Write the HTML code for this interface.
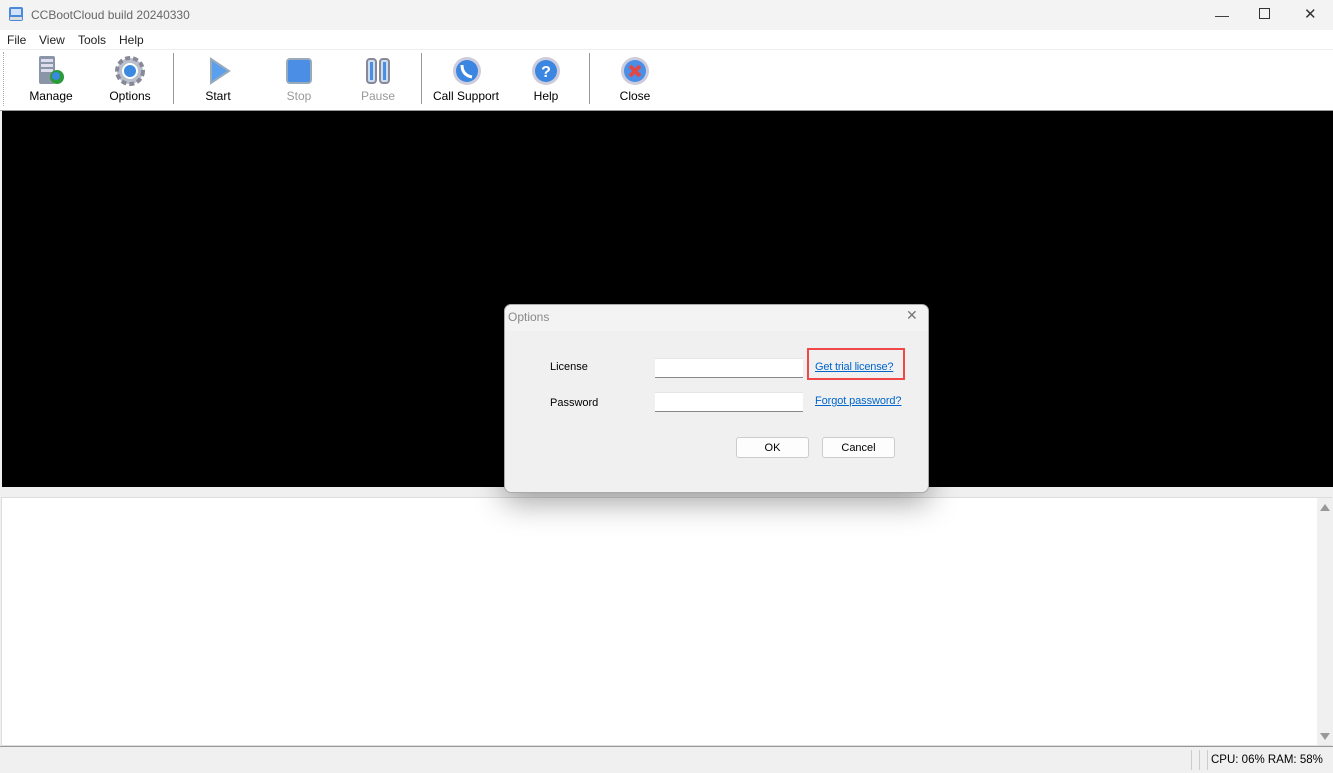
<!DOCTYPE html>
<html><head><style>
*{margin:0;padding:0;box-sizing:border-box}
body{width:1333px;height:773px;position:relative;overflow:hidden;background:#f0f0f0;font-family:"Liberation Sans",sans-serif;font-size:12px;color:#000}
.a{position:absolute}
.tb{font-size:12px;text-align:center;width:80px}
.lnk{color:#0066cc;text-decoration:underline;font-size:11px}
</style></head><body>
<div class="a" style="left:0;top:0;width:1333px;height:30px;background:#f3f3f3"></div>
<svg class="a" style="left:8px;top:6px" width="16" height="16"><rect x="1" y="1" width="14" height="14" rx="2" fill="#4a8ad8"/><rect x="3" y="3" width="10" height="6" fill="#cfe3ff"/><rect x="2" y="11" width="12" height="3" fill="#ddd"/></svg>
<div class="a" style="left:31px;top:8px;font-size:12px;color:#666">CCBootCloud build 20240330</div>
<div class="a" style="left:1215px;top:7px;font-size:14px;color:#333">&#8212;</div>
<div class="a" style="left:1259px;top:8px;width:11px;height:11px;border:1px solid #333"></div>
<div class="a" style="left:1304px;top:5px;font-size:15px;color:#333">&#10005;</div>
<div class="a" style="left:0;top:30px;width:1333px;height:19px;background:#fff"></div>
<div class="a" style="left:7px;top:33px;color:#222">File</div>
<div class="a" style="left:39px;top:33px;color:#222">View</div>
<div class="a" style="left:78px;top:33px;color:#222">Tools</div>
<div class="a" style="left:119px;top:33px;color:#222">Help</div>
<div class="a" style="left:0;top:49px;width:1333px;height:62px;background:#fff;border-top:1px solid #eee"></div>
<div class="a" style="left:3px;top:52px;height:54px;border-left:1px dotted #aaa"></div>
<div class="a" style="left:173px;top:53px;width:1px;height:51px;background:#999"></div>
<div class="a" style="left:421px;top:53px;width:1px;height:51px;background:#999"></div>
<div class="a" style="left:589px;top:53px;width:1px;height:51px;background:#999"></div>
<svg class="a" style="left:36px;top:55px" width="32" height="32"><rect x="3" y="1" width="16" height="28" rx="2" fill="#8a96a8"/><rect x="5" y="4" width="12" height="3" fill="#dde"/><rect x="5" y="9" width="12" height="3" fill="#dde"/><rect x="5" y="14" width="12" height="3" fill="#dde"/><circle cx="21" cy="22" r="7" fill="#2a9a3a"/><circle cx="20" cy="21" r="4" fill="#3a8ae0"/></svg>
<svg class="a" style="left:114px;top:55px" width="32" height="32"><circle cx="16" cy="16" r="13" fill="#b8c0cc" stroke="#889" stroke-dasharray="5 3" stroke-width="4"/><circle cx="16" cy="16" r="7" fill="#3a8ae0" stroke="#fff" stroke-width="2"/></svg>
<svg class="a" style="left:203px;top:55px" width="32" height="32"><path d="M8 4 L26 16 L8 28 Z" fill="#5aa0ec" stroke="#9ab" stroke-width="2"/></svg>
<svg class="a" style="left:283px;top:55px" width="32" height="32"><rect x="4" y="4" width="24" height="24" rx="3" fill="#4a8ee6" stroke="#9ab" stroke-width="2"/></svg>
<svg class="a" style="left:362px;top:55px" width="32" height="32"><rect x="5" y="4" width="9" height="24" rx="3" fill="#cde" stroke="#889" stroke-width="2"/><rect x="18" y="4" width="9" height="24" rx="3" fill="#cde" stroke="#889" stroke-width="2"/><rect x="8" y="7" width="3" height="18" fill="#4a8ee6"/><rect x="21" y="7" width="3" height="18" fill="#4a8ee6"/></svg>
<svg class="a" style="left:451px;top:55px" width="32" height="32"><circle cx="16" cy="16" r="14" fill="#ccd" /><circle cx="16" cy="16" r="11" fill="#3a86e0"/><path d="M11 10 q0 10 10 12" stroke="#fff" stroke-width="3" fill="none"/></svg>
<svg class="a" style="left:530px;top:55px" width="32" height="32"><circle cx="16" cy="16" r="14" fill="#ccd"/><circle cx="16" cy="16" r="11" fill="#3a86e0"/><text x="16" y="22" font-size="16" font-weight="bold" fill="#fff" text-anchor="middle" font-family="Liberation Sans">?</text></svg>
<svg class="a" style="left:619px;top:55px" width="32" height="32"><circle cx="16" cy="16" r="14" fill="#ccd"/><circle cx="16" cy="16" r="11" fill="#4a8ee6"/><path d="M11 11 L21 21 M21 11 L11 21" stroke="#e04848" stroke-width="4"/></svg>
<div class="a tb" style="left:11px;top:89px">Manage</div>
<div class="a tb" style="left:90px;top:89px">Options</div>
<div class="a tb" style="left:178px;top:89px">Start</div>
<div class="a tb" style="left:259px;top:89px;color:#999">Stop</div>
<div class="a tb" style="left:338px;top:89px;color:#999">Pause</div>
<div class="a tb" style="left:426px;top:89px">Call Support</div>
<div class="a tb" style="left:506px;top:89px">Help</div>
<div class="a tb" style="left:595px;top:89px">Close</div>
<div class="a" style="left:0;top:110px;width:1333px;height:1px;background:#999"></div>
<div class="a" style="left:2px;top:111px;width:1331px;height:376px;background:#000"></div>
<div class="a" style="left:0;top:487px;width:1333px;height:10px;background:#f0f0f0"></div>
<div class="a" style="left:1px;top:497px;width:1331px;height:249px;background:#fff;border:1px solid #ddd"></div>
<div class="a" style="left:1317px;top:498px;width:15px;height:247px;background:#f0f0f0"></div>
<div class="a" style="left:1320px;top:504px;border:5px solid transparent;border-bottom:7px solid #999;border-top:0"></div>
<div class="a" style="left:1320px;top:733px;border:5px solid transparent;border-top:7px solid #999;border-bottom:0"></div>
<div class="a" style="left:0;top:746px;width:1333px;height:1px;background:#999"></div>
<div class="a" style="left:1191px;top:750px;width:1px;height:20px;background:#ccc"></div>
<div class="a" style="left:1199px;top:750px;width:1px;height:20px;background:#ccc"></div>
<div class="a" style="left:1207px;top:750px;width:1px;height:20px;background:#ccc"></div>
<div class="a" style="left:1211px;top:754px;font-size:11.5px">CPU: 06% RAM: 58%</div>
<div class="a" style="left:504px;top:304px;width:425px;height:189px;background:#f0f0f0;border:1px solid #aaa;border-radius:7px;box-shadow:0 10px 30px rgba(0,0,0,.35);overflow:hidden">
<div style="height:26px;background:#f3f3f3"></div>
</div>
<div class="a" style="left:508px;top:310px;color:#888;font-size:12px">Options</div>
<div class="a" style="left:906px;top:307px;color:#777;font-size:14px">&#10005;</div>
<div class="a" style="left:550px;top:361px;font-size:11px">License</div>
<div class="a" style="left:550px;top:397px;font-size:11px">Password</div>
<div class="a" style="left:655px;top:358px;width:148px;height:20px;background:#fff;border-bottom:1px solid #888;border-top:1px solid #e5e5e5"></div>
<div class="a" style="left:655px;top:392px;width:148px;height:20px;background:#fff;border-bottom:1px solid #888;border-top:1px solid #e5e5e5"></div>
<div class="a" style="left:807px;top:348px;width:98px;height:32px;border:2px solid #f04848"></div>
<div class="a lnk" style="left:815px;top:361px;letter-spacing:-0.2px">Get trial license?</div>
<div class="a lnk" style="left:815px;top:395px;letter-spacing:-0.1px">Forgot password?</div>
<div class="a" style="left:736px;top:437px;width:73px;height:21px;background:#fdfdfd;border:1px solid #ccc;border-radius:3px;text-align:center;line-height:20px;font-size:11px">OK</div>
<div class="a" style="left:822px;top:437px;width:73px;height:21px;background:#fdfdfd;border:1px solid #ccc;border-radius:3px;text-align:center;line-height:20px;font-size:11px">Cancel</div>
</body></html>
